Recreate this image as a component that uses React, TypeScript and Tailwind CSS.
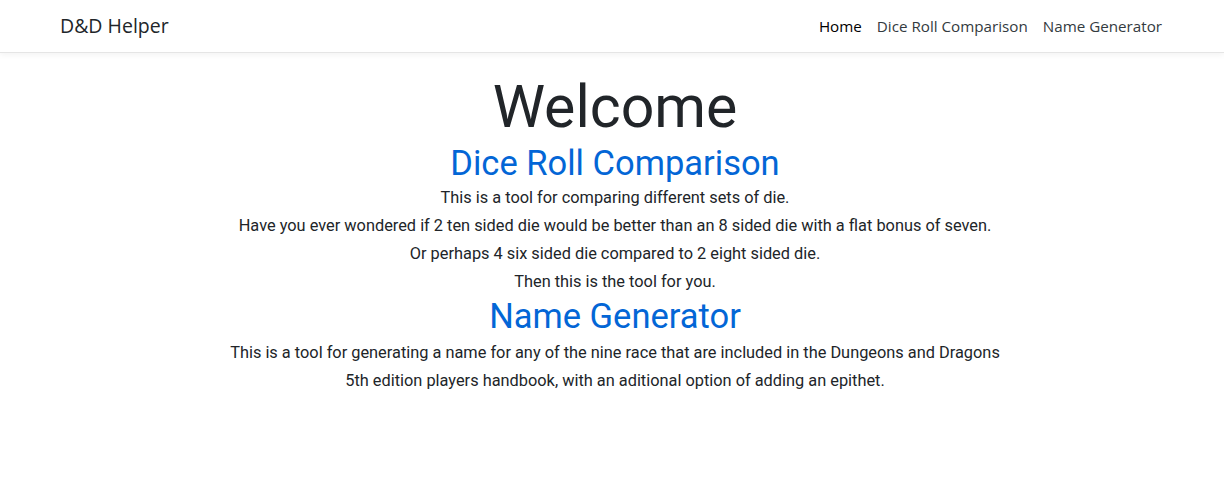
import React from 'react';

const App: React.FC = () => {
  return (
    <div className="min-h-screen bg-white text-[#212529] font-['Roboto',sans-serif]">
      <nav className="h-[53px] border-b border-[#e5e5e5] bg-white shadow-[0_2px_6px_rgba(0,0,0,0.05)] font-['Open_Sans',sans-serif]">
        <div className="flex items-center justify-between h-full pl-[60px] pr-[62px]">
          <a className="text-[19.5px] text-[#212529]">D&amp;D Helper</a>
          <ul className="flex items-center gap-[15px] text-[15.2px] text-[#212529]">
            <li className="text-black">Home</li>
            <li className="text-[#333a40]">Dice Roll Comparison</li>
            <li className="text-[#333a40]">Name Generator</li>
          </ul>
        </div>
      </nav>
      <main className="flex flex-col items-center text-center pt-[18px] pl-[6px]">
        <h1 className="text-[59px] leading-[72px] font-normal">Welcome</h1>
        <h2 className="text-[34.5px] leading-[41px] text-[#0366d6]">Dice Roll Comparison</h2>
        <div className="text-[16.35px] leading-7">
          <p>This is a tool for comparing different sets of die.</p>
          <p>Have you ever wondered if 2 ten sided die would be better than an 8 sided die with a flat bonus of seven.</p>
          <p>Or perhaps 4 six sided die compared to 2 eight sided die.</p>
          <p>Then this is the tool for you.</p>
        </div>
        <h2 className="text-[34.5px] leading-[41px] text-[#0366d6]">Name Generator</h2>
        <div className="mt-[2px] text-[16.35px] leading-7 max-w-[785px]">
          <p>This is a tool for generating a name for any of the nine race that are included in the Dungeons and Dragons 5th edition players handbook, with an aditional option of adding an epithet.</p>
        </div>
      </main>
    </div>
  );
};

export default App;
